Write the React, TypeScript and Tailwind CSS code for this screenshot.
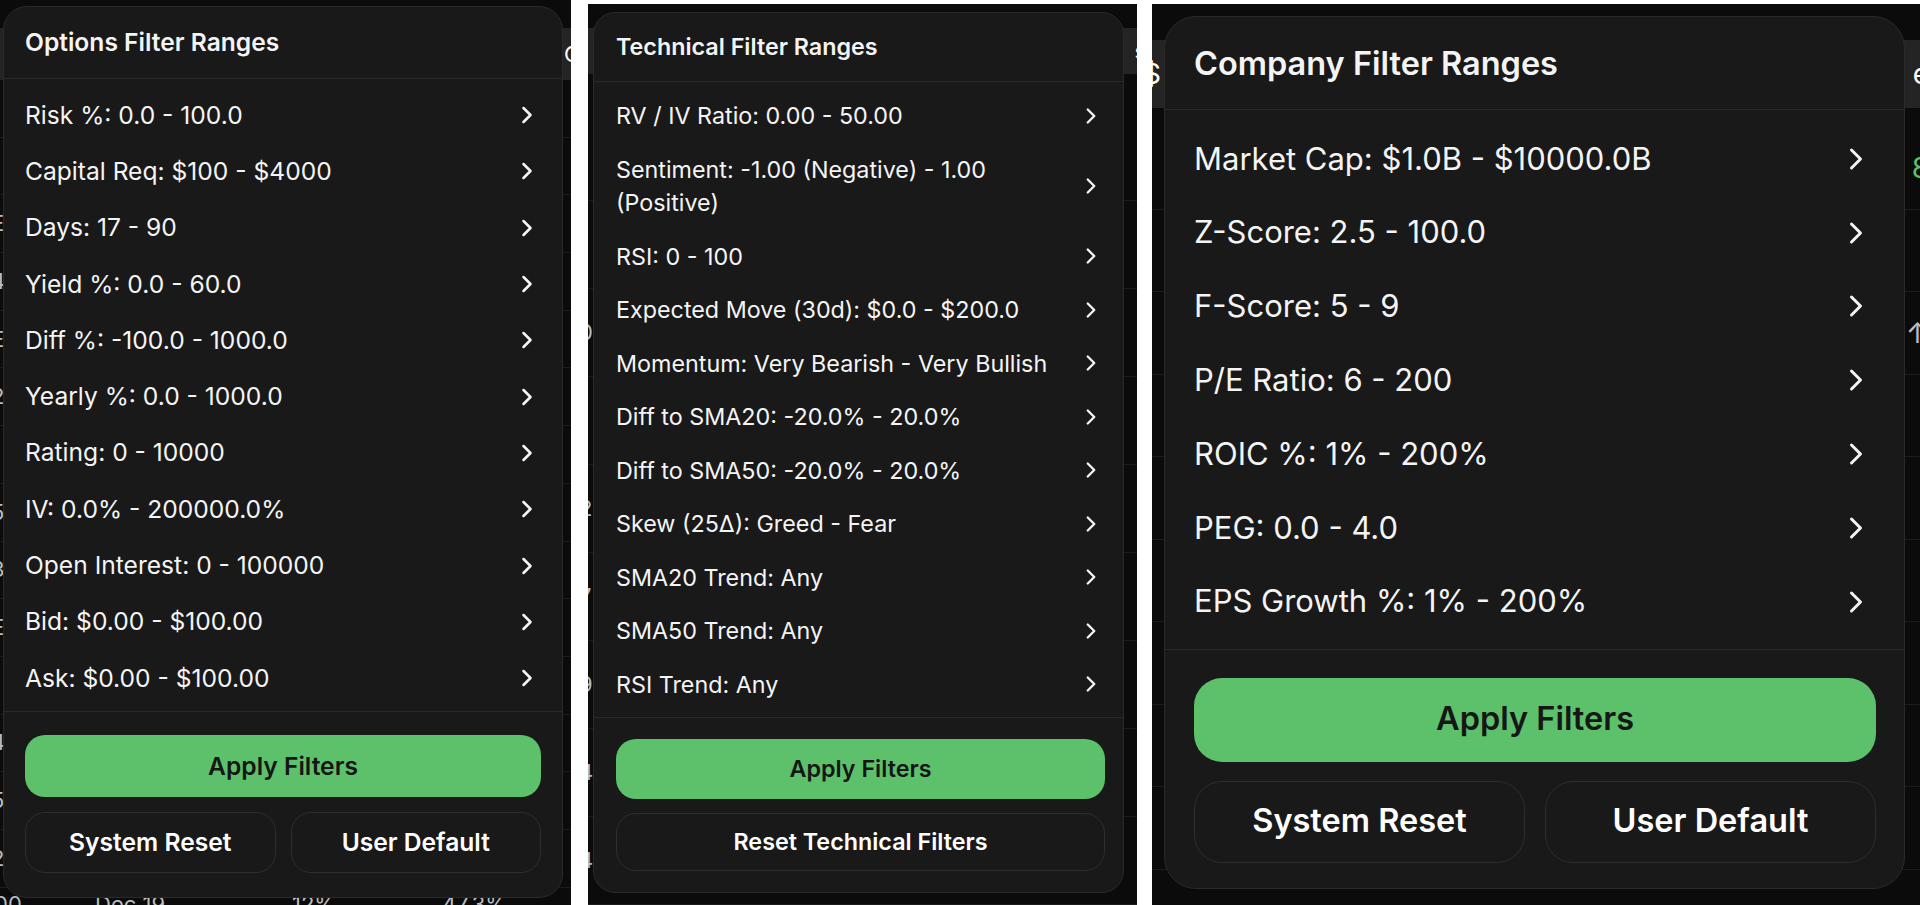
import { ChevronRight } from "lucide-react";

const options = [
  "Risk %: 0.0 - 100.0",
  "Capital Req: $100 - $4000",
  "Days: 17 - 90",
  "Yield %: 0.0 - 60.0",
  "Diff %: -100.0 - 1000.0",
  "Yearly %: 0.0 - 1000.0",
  "Rating: 0 - 10000",
  "IV: 0.0% - 200000.0%",
  "Open Interest: 0 - 100000",
  "Bid: $0.00 - $100.00",
  "Ask: $0.00 - $100.00",
];

const technical = [
  "RV / IV Ratio: 0.00 - 50.00",
  "Sentiment: -1.00 (Negative) - 1.00\n(Positive)",
  "RSI: 0 - 100",
  "Expected Move (30d): $0.0 - $200.0",
  "Momentum: Very Bearish - Very Bullish",
  "Diff to SMA20: -20.0% - 20.0%",
  "Diff to SMA50: -20.0% - 20.0%",
  "Skew (25Δ): Greed - Fear",
  "SMA20 Trend: Any",
  "SMA50 Trend: Any",
  "RSI Trend: Any",
];

const company = [
  "Market Cap: $1.0B - $10000.0B",
  "Z-Score: 2.5 - 100.0",
  "F-Score: 5 - 9",
  "P/E Ratio: 6 - 200",
  "ROIC %: 1% - 200%",
  "PEG: 0.0 - 4.0",
  "EPS Growth %: 1% - 200%",
];

const font = { fontFamily: "Inter, 'Noto Sans', sans-serif" };

type Item = { h: number; l?: string; r?: string; band?: boolean; green?: boolean; line?: boolean };

function EdgeTable({ items, size }: { items: Item[]; size: string }) {
  return (
    <div className={`flex flex-col w-full ${size}`}>
      {items.map((it, i) => (
        <div
          key={i}
          style={{ height: it.h }}
          className={`shrink-0 flex items-center justify-between ml-[-9px] mr-[-9px] ${
            it.band ? "bg-[#242424] text-white" : "bg-[#0b0b0b] text-[#bdbdbd]"
          } ${it.line ? "border-b border-[#1c1c1c]" : ""}`}
        >
          <span>{it.l ?? ""}</span>
          <span className={it.green ? "text-[#5cc16a]" : ""}>{it.r ?? ""}</span>
        </div>
      ))}
    </div>
  );
}

function OptionsPanel() {
  const lefts = ["|", "1", "E", "4", "E", "2", "1", "5", "3", "E", "1", "4", "5", "2"];
  const items: Item[] = [
    { h: 28 },
    { h: 52, band: true, l: ":", r: "C" },
    ...lefts.map((l) => ({ h: 57.7, l, line: true })),
  ];
  return (
    <div className="relative w-[571px] h-[905px] shrink-0 overflow-hidden bg-[#0b0b0b]">
      <EdgeTable items={items} size="text-[22px]" />
      <div className="flex items-start h-[40px] text-[22px] text-[#bdbdbd] bg-[#0b0b0b]">
        <span className="w-[101px] ml-[-6px]">00</span>
        <span className="w-[197px]">Dec 19</span>
        <span className="w-[150px]">12%</span>
        <span>47.3%</span>
      </div>
      <div className="absolute left-[3px] top-[6px] w-[560px] h-[892px] rounded-[24px] border border-[#2a2a2a] bg-[#191919] flex flex-col text-[#f4f4f4]">
        <div className="h-[72px] shrink-0 flex items-center pl-[21px] border-b border-[#2a2a2a] text-[24.6px] font-semibold">
          Options Filter Ranges
        </div>
        <div className="pt-[8px] pb-[5px] border-b border-[#2a2a2a] flex flex-col">
          {options.map((t) => (
            <div key={t} className="h-[56.3px] flex items-center justify-between pl-[21px] pr-[21px] text-[24.6px]">
              <span>{t}</span>
              <ChevronRight size={28} strokeWidth={2.2} />
            </div>
          ))}
        </div>
        <div className="pt-[23px] pl-[21px] pr-[21px] flex flex-col gap-[15px]">
          <button className="h-[62px] rounded-[20px] bg-[#5cc16a] text-[#161616] font-semibold text-[24.6px]">Apply Filters</button>
          <div className="flex gap-[15px]">
            <button className="flex-1 h-[61px] rounded-[20px] border border-[#2e2e2e] text-[24.6px] font-semibold text-white">System Reset</button>
            <button className="flex-1 h-[61px] rounded-[20px] border border-[#2e2e2e] text-[24.6px] font-semibold text-white">User Default</button>
          </div>
        </div>
      </div>
    </div>
  );
}

function TechnicalPanel() {
  const lefts = ["i", "0", "1", "2", "7", "9", "4", "4"];
  const items: Item[] = [
    { h: 24 },
    { h: 46, band: true, l: "(", r: "s" },
    { h: 127, line: true },
    ...lefts.map((l) => ({ h: 88, l, line: true })),
  ];
  return (
    <div className="relative w-[549px] h-[901px] mt-[4px] shrink-0 overflow-hidden bg-[#0b0b0b]">
      <EdgeTable items={items} size="text-[22px]" />
      <div className="absolute left-[5px] top-[8px] w-[531px] h-[881px] rounded-[22px] border border-[#2a2a2a] bg-[#191919] flex flex-col text-[#f4f4f4]">
        <div className="h-[69px] shrink-0 flex items-center pl-[22px] border-b border-[#2a2a2a] text-[23.3px] font-semibold">
          Technical Filter Ranges
        </div>
        <div className="pt-[7px] pb-[6px] border-b border-[#2a2a2a] flex flex-col">
          {technical.map((t) => (
            <div
              key={t}
              className={`${t.includes("\n") ? "h-[87px]" : "h-[53.5px]"} flex items-center justify-between pl-[22px] pr-[19px] text-[23.3px]`}
            >
              <span className="whitespace-pre-line leading-[33px]">{t}</span>
              <ChevronRight size={26} strokeWidth={2.2} />
            </div>
          ))}
        </div>
        <div className="pt-[21px] pl-[22px] pr-[18px] flex flex-col gap-[14px]">
          <button className="h-[60px] rounded-[20px] bg-[#5cc16a] text-[#161616] font-semibold text-[23.3px]">Apply Filters</button>
          <button className="h-[58px] rounded-[20px] border border-[#2e2e2e] text-[23.3px] font-semibold text-white">Reset Technical Filters</button>
        </div>
      </div>
    </div>
  );
}

function CompanyPanel() {
  const items: Item[] = [
    { h: 36 },
    { h: 68, band: true, l: "$", r: "e" },
    { h: 19 },
    { h: 82.5, r: "8", green: true, line: true },
    { h: 82.5, line: true },
    { h: 82.5, r: "↑", line: true },
    { h: 82.5, line: true },
    { h: 82.5, line: true },
    { h: 82.5, line: true },
    { h: 82.5, line: true },
    { h: 82.5, line: true },
    { h: 82.5, line: true },
  ];
  return (
    <div className="relative w-[768px] h-[901px] mt-[4px] shrink-0 overflow-hidden bg-[#0b0b0b]">
      <EdgeTable items={items} size="text-[28px]" />
      <div className="absolute left-[12px] top-[12px] w-[741px] h-[873px] rounded-[32px] border border-[#2a2a2a] bg-[#191919] flex flex-col text-[#f4f4f4]">
        <div className="h-[93px] shrink-0 flex items-center pl-[29px] pt-[2px] border-b border-[#2a2a2a] text-[32.5px] font-semibold">
          Company Filter Ranges
        </div>
        <div className="pt-[12px] pb-[10px] border-b border-[#2a2a2a] flex flex-col">
          {company.map((t) => (
            <div key={t} className="h-[73.8px] flex items-center justify-between pl-[29px] pr-[30px] text-[31px]">
              <span>{t}</span>
              <ChevronRight size={36} strokeWidth={2} />
            </div>
          ))}
        </div>
        <div className="pt-[28px] pl-[29px] pr-[28px] flex flex-col gap-[19px]">
          <button className="h-[84px] rounded-[28px] bg-[#5cc16a] text-[#161616] font-semibold text-[32.5px]">Apply Filters</button>
          <div className="flex gap-[20px]">
            <button className="flex-1 h-[82px] rounded-[28px] border border-[#2e2e2e] text-[32.5px] font-semibold text-white">System Reset</button>
            <button className="flex-1 h-[82px] rounded-[28px] border border-[#2e2e2e] text-[32.5px] font-semibold text-white">User Default</button>
          </div>
        </div>
      </div>
    </div>
  );
}

export default function App() {
  return (
    <div className="w-[1920px] h-[905px] bg-white flex overflow-hidden" style={font}>
      <OptionsPanel />
      <div className="w-[17px] shrink-0" />
      <TechnicalPanel />
      <div className="w-[15px] shrink-0" />
      <CompanyPanel />
    </div>
  );
}
